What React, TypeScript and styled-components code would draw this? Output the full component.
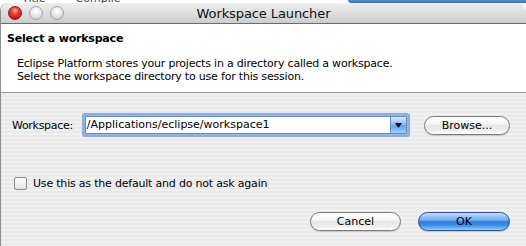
import React from "react";
import styled, { createGlobalStyle } from "styled-components";

const Global = createGlobalStyle`
  html, body { margin: 0; padding: 0; background: #ffffff; }
  body { font-family: "Lucida Grande", "DejaVu Sans", sans-serif; color: #000; }
  * { box-sizing: border-box; }
`;

const Desktop = styled.div`
  width: 526px;
  height: 246px;
  overflow: hidden;
  display: flex;
  flex-direction: column;
  background: #ffffff;
`;

const BackStrip = styled.div`
  height: 3px;
  flex-shrink: 0;
  display: flex;
  align-items: flex-end;
  overflow: hidden;
`;

const BackText = styled.span<{ $left: number }>`
  margin-left: ${(p) => p.$left}px;
  font-size: 11px;
  line-height: 9px;
  color: #444;
  white-space: nowrap;
`;

const BlueBar = styled.div`
  margin-left: auto;
  width: 178px;
  height: 3px;
  background: linear-gradient(#5b8fd6, #3b70bf);
  border-bottom-left-radius: 3px;
`;

const Window = styled.div`
  flex: 1;
  display: flex;
  flex-direction: column;
  border-radius: 8px 8px 0 0;
  overflow: hidden;
  border-left: 1px solid #8f8f8f;
  background: #fff;
`;

const TitleBar = styled.div`
  height: 21px;
  flex-shrink: 0;
  display: grid;
  grid-template-columns: 1fr auto 1fr;
  align-items: center;
  background: linear-gradient(#eeeeee, #dcdcdc 55%, #cdcdcd);
  border-bottom: 1px solid #6b6b6b;
`;

const Lights = styled.div`
  display: flex;
  gap: 7px;
  padding-left: 7px;
`;

const Light = styled.span<{ $red?: boolean }>`
  width: 14px;
  height: 14px;
  border-radius: 50%;
  border: 1px solid ${(p) => (p.$red ? "#8a1a1e" : "#a3a3a3")};
  background: ${(p) =>
    p.$red
      ? "radial-gradient(circle at 50% 30%, #ffb3b0 0%, #ef4a46 30%, #d01f24 65%, #8e1317 100%)"
      : "radial-gradient(circle at 50% 35%, #ffffff 0%, #ececec 40%, #d2d2d2 80%, #bdbdbd 100%)"};
`;

const Title = styled.div`
  font-size: 13px;
  letter-spacing: -0.1px;
  color: #111;
  white-space: nowrap;
`;

const Header = styled.div`
  flex-shrink: 0;
  height: 69px;
  padding: 8px 0 0 6px;
  background: #fff;
  border-bottom: 1px solid #9a9a9a;
  display: flex;
  flex-direction: column;
`;

const Heading = styled.div`
  font-size: 11px;
  font-weight: bold;
  letter-spacing: -0.2px;
  line-height: 14px;
`;

const Description = styled.div`
  margin-top: 11px;
  padding-left: 10px;
  font-size: 11px;
  letter-spacing: -0.2px;
  line-height: 13px;
`;

const Body = styled.div`
  flex: 1;
  display: flex;
  flex-direction: column;
  background: repeating-linear-gradient(
    to bottom,
    #f0f0f0 0px,
    #f0f0f0 2px,
    #e9e9e9 2px,
    #e9e9e9 4px
  );
`;

const WorkspaceRow = styled.div`
  margin-top: 20px;
  height: 24px;
  display: flex;
  align-items: center;
  padding: 0 16px 0 11px;
`;

const Label = styled.span`
  font-size: 11px;
  letter-spacing: -0.2px;
  white-space: nowrap;
`;

const FieldLabel = styled(Label)`
  letter-spacing: -0.3px;
`;

const Combo = styled.div`
  margin-left: 12px;
  flex: 1;
  height: 18px;
  display: flex;
  border: 1px solid #6689b8;
  box-shadow: 0 0 0 1px #98b9e2, 0 0 0 3px rgba(112, 158, 218, 0.8);
  border-radius: 1px;
  background: #fff;
`;

const ComboInput = styled.div`
  flex: 1;
  font-size: 11px;
  line-height: 16px;
  padding-left: 1px;
  white-space: nowrap;
  overflow: hidden;
`;

const ComboButton = styled.div`
  width: 16px;
  display: flex;
  align-items: center;
  justify-content: center;
  border-left: 1px solid #5f8ac4;
  background: linear-gradient(#d6e9fd 0%, #8dc0f5 45%, #5ea3ef 55%, #9bd2ff 100%);
`;

const PillButton = styled.div<{ $default?: boolean; $width: number }>`
  width: ${(p) => p.$width}px;
  height: 19px;
  border-radius: 10px;
  display: flex;
  align-items: center;
  justify-content: center;
  font-size: 11px;
  color: #000;
  border: 1px solid ${(p) => (p.$default ? "#24529a" : "#7b7b7b")};
  background: ${(p) =>
    p.$default
      ? "linear-gradient(#c4ddfa 0%, #72abef 42%, #2f7de0 52%, #3d8be6 72%, #8ed0ff 100%)"
      : "linear-gradient(#ffffff 0%, #f6f6f6 40%, #e6e6e6 52%, #ececec 75%, #ffffff 100%)"};
  box-shadow: 0 1px 1px rgba(0, 0, 0, 0.15);
`;

const BrowseButton = styled(PillButton)`
  margin-left: 17px;
`;

const CheckRow = styled.div`
  margin-top: 40px;
  display: flex;
  align-items: center;
  gap: 6px;
  padding-left: 13px;
`;

const CheckBox = styled.span`
  width: 13px;
  height: 13px;
  border: 1px solid #8a8a8a;
  border-radius: 2px;
  background: linear-gradient(#ffffff, #f2f2f2 50%, #e2e2e2);
`;

const ButtonRow = styled.div`
  margin-top: 22px;
  display: flex;
  justify-content: flex-end;
  gap: 17px;
  padding-right: 16px;
`;

export default function App() {
  return (
    <Desktop>
      <Global />
      <BackStrip>
        <BackText $left={22}>Title</BackText>
        <BackText $left={30}>Compile</BackText>
        <BlueBar />
      </BackStrip>
      <Window>
        <TitleBar>
          <Lights>
            <Light $red />
            <Light />
            <Light />
          </Lights>
          <Title>Workspace Launcher</Title>
          <span />
        </TitleBar>
        <Header>
          <Heading>Select a workspace</Heading>
          <Description>
            Eclipse Platform stores your projects in a directory called a workspace.
            <br />
            Select the workspace directory to use for this session.
          </Description>
        </Header>
        <Body>
          <WorkspaceRow>
            <FieldLabel>Workspace:</FieldLabel>
            <Combo>
              <ComboInput>/Applications/eclipse/workspace1</ComboInput>
              <ComboButton>
                <svg width="7" height="5" viewBox="0 0 7 5">
                  <path d="M0 0 L7 0 L3.5 5 Z" fill="#111" />
                </svg>
              </ComboButton>
            </Combo>
            <BrowseButton $width={86}>Browse...</BrowseButton>
          </WorkspaceRow>
          <CheckRow>
            <CheckBox />
            <Label>Use this as the default and do not ask again</Label>
          </CheckRow>
          <ButtonRow>
            <PillButton $width={91}>Cancel</PillButton>
            <PillButton $width={92} $default>
              OK
            </PillButton>
          </ButtonRow>
        </Body>
      </Window>
    </Desktop>
  );
}
